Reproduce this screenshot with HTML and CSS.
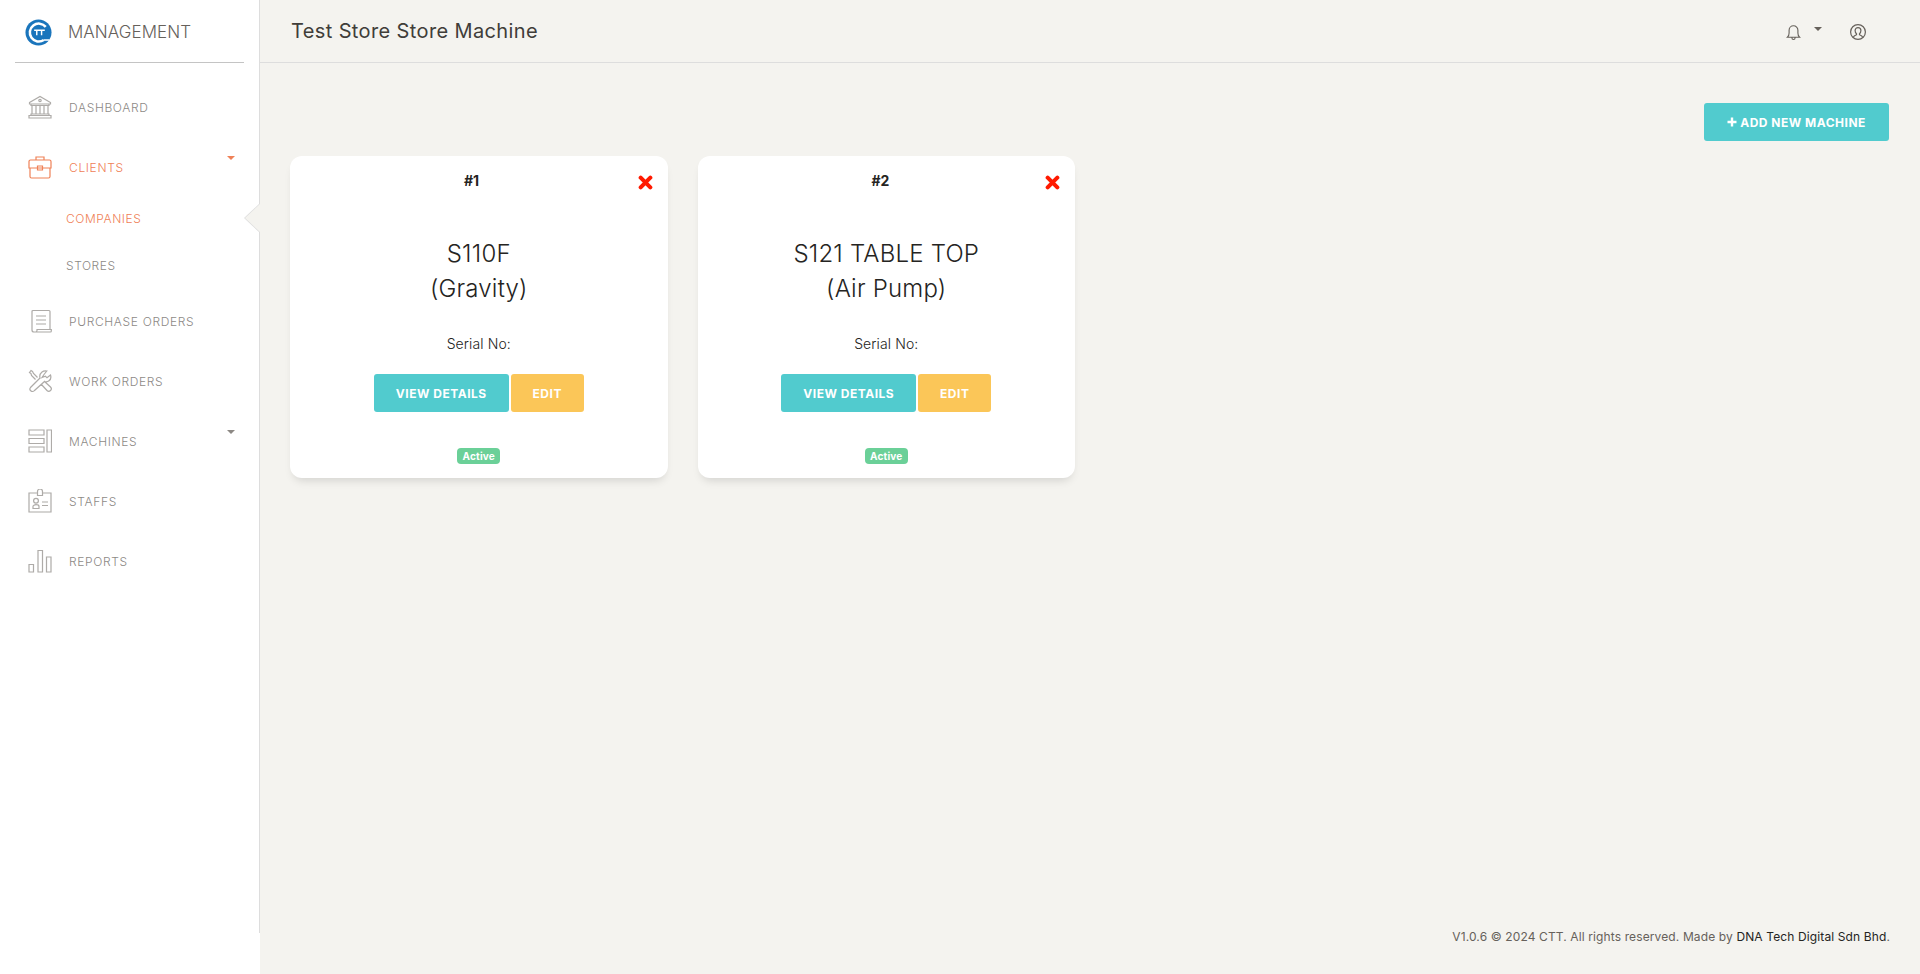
FILE: index.html
```html
<!DOCTYPE html>
<html lang="en">
<head>
<meta charset="utf-8">
<title>Test Store Store Machine</title>
<link rel="stylesheet" href="styles.css">
</head>
<body>
<div class="app">
  <aside class="sidebar">
    <div class="sidebar-inner">
      <div class="brand">
        <svg class="logo" viewBox="0 0 28 28"><circle cx="14" cy="14" r="13.500" fill="#1a75bc"/><path d="M21.500 8.200A9.300 9.300 0 1 0 19.500 21.800" fill="none" stroke="#fff" stroke-width="2.600"/><path d="M19.500 21.800h6" stroke="#fff" stroke-width="1.600"/><path d="M9.500 11.600h11M12.200 11.600v5.200M17.200 11.600v5.200" fill="none" stroke="#fff" stroke-width="1.500"/></svg>
        <span class="brand-name">MANAGEMENT</span>
      </div>
      <nav class="nav">
        <a class="nav-item">
          <svg class="nav-icon" viewBox="0 0 24 24"><path d="M1.500 7.500 12 1.500l10.500 6v1.500h-21zM3 9v1.500h18V9M4 11v8M8 11v8M12 11v8M16 11v8M20 11v8M3 19h18v1.500H3zM1 20.500h22v2.500H1z"/><circle cx="12" cy="5.500" r="1.200"/></svg>
          <span>DASHBOARD</span>
        </a>
        <a class="nav-item active">
          <svg class="nav-icon" viewBox="0 0 24 24"><path d="M8 5V2h8v3M2.500 5h19A1.500 1.500 0 0 1 23 6.500V13H1V6.500A1.500 1.500 0 0 1 2.500 5zM2 13v8.500A1.500 1.500 0 0 0 3.500 23h17a1.500 1.500 0 0 0 1.500-1.500V13M9.500 11h5v4h-5z"/></svg>
          <span>CLIENTS</span>
          <i class="caret"></i>
        </a>
        <div class="sub-list">
          <a class="sub-item active">COMPANIES</a>
          <a class="sub-item">STORES</a>
        </div>
        <a class="nav-item">
          <svg class="nav-icon" viewBox="0 0 24 24"><path d="M4 19.500V2.500A1 1 0 0 1 5 1.500h16a1 1 0 0 1 1 1v18.500M8 7h10M8 11h10M8 15h10M4 19.500V21a2 2 0 0 0 2 2h16.500c.5 0 .8-.5.800-1v-1.500H9v1c0 1-.8 1.500-1.500 1.500"/></svg>
          <span>PURCHASE ORDERS</span>
        </a>
        <a class="nav-item">
          <svg class="nav-icon" viewBox="0 0 24 24"><path d="M14 8.500l3.500-1.200 1.500 1.500 3.500-2.800c.8 2.400.2 4.500-1.500 5.800-1.300 1-3 1.200-4.500.7L6.500 21.500a2.500 2.500 0 0 1-4-3l9.500-9.500c-.6-2.300.1-4.500 2-6 1.400-1.100 3-1.300 4.800-1l-2.800 3.500zM7.500 10.500 3.500 6.500 3 4.500 1.500 3.500l1.500-2 1.500 1 1 2 4 4M13 15l6 6.500a2.300 2.300 0 0 0 3.500-3.500L16 12"/></svg>
          <span>WORK ORDERS</span>
        </a>
        <a class="nav-item">
          <svg class="nav-icon" viewBox="0 0 24 24"><path d="M1 1h15v5H1zM1 9.500h15v5H1zM1 18h15v5H1zM19 1h4.500v22H19z"/></svg>
          <span>MACHINES</span>
          <i class="caret"></i>
        </a>
        <a class="nav-item">
          <svg class="nav-icon" viewBox="0 0 24 24"><path d="M9 4H1v19h22V4h-8M9.500 6.500V2.500a2.500 2.500 0 0 1 5 0v4zM14 13h6M14 16.500h6M5 19.500v-2c0-1 1.500-1.800 3-1.800s3 .8 3 1.800v2z"/><circle cx="8" cy="11.800" r="2.400"/></svg>
          <span>STAFFS</span>
        </a>
        <a class="nav-item">
          <svg class="nav-icon" viewBox="0 0 24 24"><path d="M1 15.500h4.500V23H1zM10 1.500h4.500V23H10zM18.500 8h4.500v15h-4.500z"/></svg>
          <span>REPORTS</span>
        </a>
      </nav>
      <span class="active-arrow"></span>
    </div>
  </aside>
  <div class="main">
    <header class="topbar">
      <h1 class="page-title">Test Store Store Machine</h1>
      <div class="top-actions">
        <svg class="top-icon bell" viewBox="0 0 16 18"><path d="M1.500 14c1.200-1 1.800-2.500 1.800-4.500V6.500a4.700 4.700 0 0 1 9.400 0v3c0 2 .6 3.500 1.800 4.500zM6.300 14.500c0 2.600 3.400 2.600 3.400 0"/></svg>
        <i class="caret dark"></i>
        <svg class="top-icon user" viewBox="0 0 16 16"><circle cx="8" cy="8" r="7.400"/><path d="M3.300 13.200c.5-1.500 1.800-2 3.200-2.500v-1C5.500 9 5.100 7.900 5.100 6.600c0-1.900 1.200-3 2.900-3s2.900 1.100 2.900 3c0 1.300-.4 2.400-1.400 3.100v1c1.400.5 2.700 1 3.200 2.500"/></svg>
      </div>
    </header>
    <main class="content">
      <div class="toolbar">
        <a class="btn btn-info btn-add"><svg class="plus" viewBox="0 0 10 10"><path d="M5 .5v9M.5 5h9"/></svg>ADD NEW MACHINE</a>
      </div>
      <div class="card-grid">
        <article class="card">
          <div class="card-top">
            <b class="card-num">#1</b>
            <svg class="close" viewBox="0 0 14 14"><path d="M2.500 2.500l9 9M11.500 2.500l-9 9"/></svg>
          </div>
          <h2 class="card-title">S110F<br>(Gravity)</h2>
          <p class="serial">Serial No:</p>
          <div class="card-actions">
            <a class="btn btn-info">VIEW DETAILS</a>
            <a class="btn btn-warning">EDIT</a>
          </div>
          <span class="badge">Active</span>
        </article>
        <article class="card">
          <div class="card-top">
            <b class="card-num">#2</b>
            <svg class="close" viewBox="0 0 14 14"><path d="M2.500 2.500l9 9M11.500 2.500l-9 9"/></svg>
          </div>
          <h2 class="card-title">S121 TABLE TOP<br>(Air Pump)</h2>
          <p class="serial">Serial No:</p>
          <div class="card-actions">
            <a class="btn btn-info">VIEW DETAILS</a>
            <a class="btn btn-warning">EDIT</a>
          </div>
          <span class="badge">Active</span>
        </article>
      </div>
    </main>
    <footer class="footer">V1.0.6 © 2024 CTT. All rights reserved. Made by <a class="footer-link">DNA Tech Digital Sdn Bhd</a>.</footer>
  </div>
</div>
</body>
</html>
```
FILE: styles.css
```css
* { box-sizing: border-box; }
html, body { margin: 0; height: 100%; }
body {
  font-family: Inter, "Liberation Sans", sans-serif;
  background: #f4f3ef;
  color: #252422;
  overflow: hidden;
}
.app { display: flex; height: 974px; }

/* Sidebar */
.sidebar { width: 260px; flex: none; background: #fff; }
.sidebar-inner {
  position: relative;
  height: 933px;
  border-right: 1px solid #ddd;
  padding: 0 15px;
}
.brand {
  display: flex;
  align-items: center;
  height: 63px;
  border-bottom: 1px solid #c4c4c4;
  width: 229px;
  padding-left: 10px;
}
.logo { width: 27px; height: 27px; flex: none; margin-top: 2px; }
.brand-name {
  margin: 2px 0 0 16px;
  font-size: 17px;
  font-weight: 300;
  color: #66615b;
  letter-spacing: .05px;
}
.nav { padding-top: 14px; margin-left: -15px; }
.nav-item {
  position: relative;
  display: flex;
  align-items: center;
  height: 60px;
  padding-left: 28px;
  color: #66615b;
  font-size: 12px;
  font-weight: 300;
  opacity: .75;
  letter-spacing: .65px;
}
.nav-item.active { color: #ef8157; opacity: 1; }
.nav-icon {
  width: 24px;
  height: 24px;
  margin-right: 17px;
  fill: none;
  stroke: currentColor;
  stroke-width: 1.200;
  opacity: .7;
  flex: none;
}
.active .nav-icon { opacity: 1; }
.caret {
  width: 0;
  height: 0;
  border-top: 4px solid currentColor;
  border-left: 4px solid transparent;
  border-right: 4px solid transparent;
}
.nav-item .caret { position: absolute; left: 227px; top: 19px; }
.sub-list { display: flex; flex-direction: column; margin-top: -2px; margin-bottom: 2px; }
.sub-item {
  display: flex;
  align-items: center;
  height: 47px;
  padding-left: 66px;
  font-size: 12px;
  font-weight: 300;
  color: #66615b;
  opacity: .75;
  letter-spacing: .55px;
}
.sub-item.active { color: #ef8157; opacity: 1; }
.active-arrow {
  position: absolute;
  left: 244px;
  top: 203px;
  width: 16px;
  height: 30px;
  background: #ddd;
  clip-path: polygon(100% 0, 0 50%, 100% 100%);
}
.active-arrow::after {
  content: "";
  position: absolute;
  inset: 0 0 0 1px;
  background: #f4f3ef;
  clip-path: polygon(100% 1px, 0 50%, 100% calc(100% - 1px));
}

/* Main */
.main { flex: 1; min-width: 0; display: flex; flex-direction: column; }
.topbar {
  display: flex;
  align-items: center;
  justify-content: space-between;
  height: 63px;
  padding: 0 54px 0 31px;
  border-bottom: 1px solid #ddd;
  flex: none;
}
.page-title { margin: 0; font-size: 20px; font-weight: 400; color: #403d39; letter-spacing: .38px; }
.top-actions { display: flex; align-items: center; color: #66615b; padding-top: 2px; }
.top-icon { fill: none; stroke: currentColor; stroke-width: 1.200; flex: none; }
.bell { width: 15px; height: 17px; }
.caret.dark { color: #66615b; margin: -6px 0 0 13px; }
.user { width: 16px; height: 16px; margin-left: 28px; }

.content { flex: 1; padding: 40px 31px 0 30px; }
.toolbar { display: flex; justify-content: flex-end; }
.btn {
  display: inline-flex;
  align-items: center;
  justify-content: center;
  height: 38px;
  border-radius: 3px;
  color: #fff;
  font-size: 12px;
  font-weight: 700;
  letter-spacing: .5px;
}
.btn-info { background: #51cbce; }
.btn-warning { background: #fbc658; }
.btn-add { width: 185px; }
.plus { width: 10px; height: 10px; margin-right: 3px; fill: none; stroke: #fff; stroke-width: 2.400; }
.card-grid { display: flex; gap: 30px; margin-top: 15px; }
.card {
  width: 377.5px;
  height: 322px;
  background: #fff;
  border-radius: 12px;
  box-shadow: 0 6px 10px -4px rgba(0, 0, 0, .15);
  display: flex;
  flex-direction: column;
  align-items: center;
  padding: 16px 15px 0;
}
.card-top { display: flex; align-items: center; justify-content: space-between; width: 100%; height: 17px; padding-left: 159px; }
.card-num { font-size: 14px; font-weight: 700; color: #252422; }
.close { width: 15px; height: 15px; margin: 3px 0 0; fill: none; stroke: #ff1a00; stroke-width: 3.800; stroke-linecap: round; }
.card-title { margin: 47px 0 0; font-size: 24px; font-weight: 300; line-height: 35px; letter-spacing: .2px; text-align: center; color: #252422; }
.serial { margin: 28px 0 0; font-size: 14px; font-weight: 300; line-height: 20px; letter-spacing: .1px; color: #252422; }
.card-actions { display: flex; gap: 2px; margin-top: 20px; }
.card-actions .btn-info { width: 135px; }
.card-actions .btn-warning { width: 73px; }
.badge {
  margin-top: 36px;
  width: 43px;
  height: 16px;
  border-radius: 4px;
  background: #6bd098;
  color: #fff;
  font-size: 10px;
  font-weight: 700;
  letter-spacing: .2px;
  display: flex;
  align-items: center;
  justify-content: center;
}
.footer {
  height: 45px;
  padding: 0 30px 0 0;
  text-align: right;
  font-size: 12px;
  line-height: 16px;
  letter-spacing: .12px;
  color: #66615b;
  flex: none;
}
.footer-link { color: #252422; }
```
